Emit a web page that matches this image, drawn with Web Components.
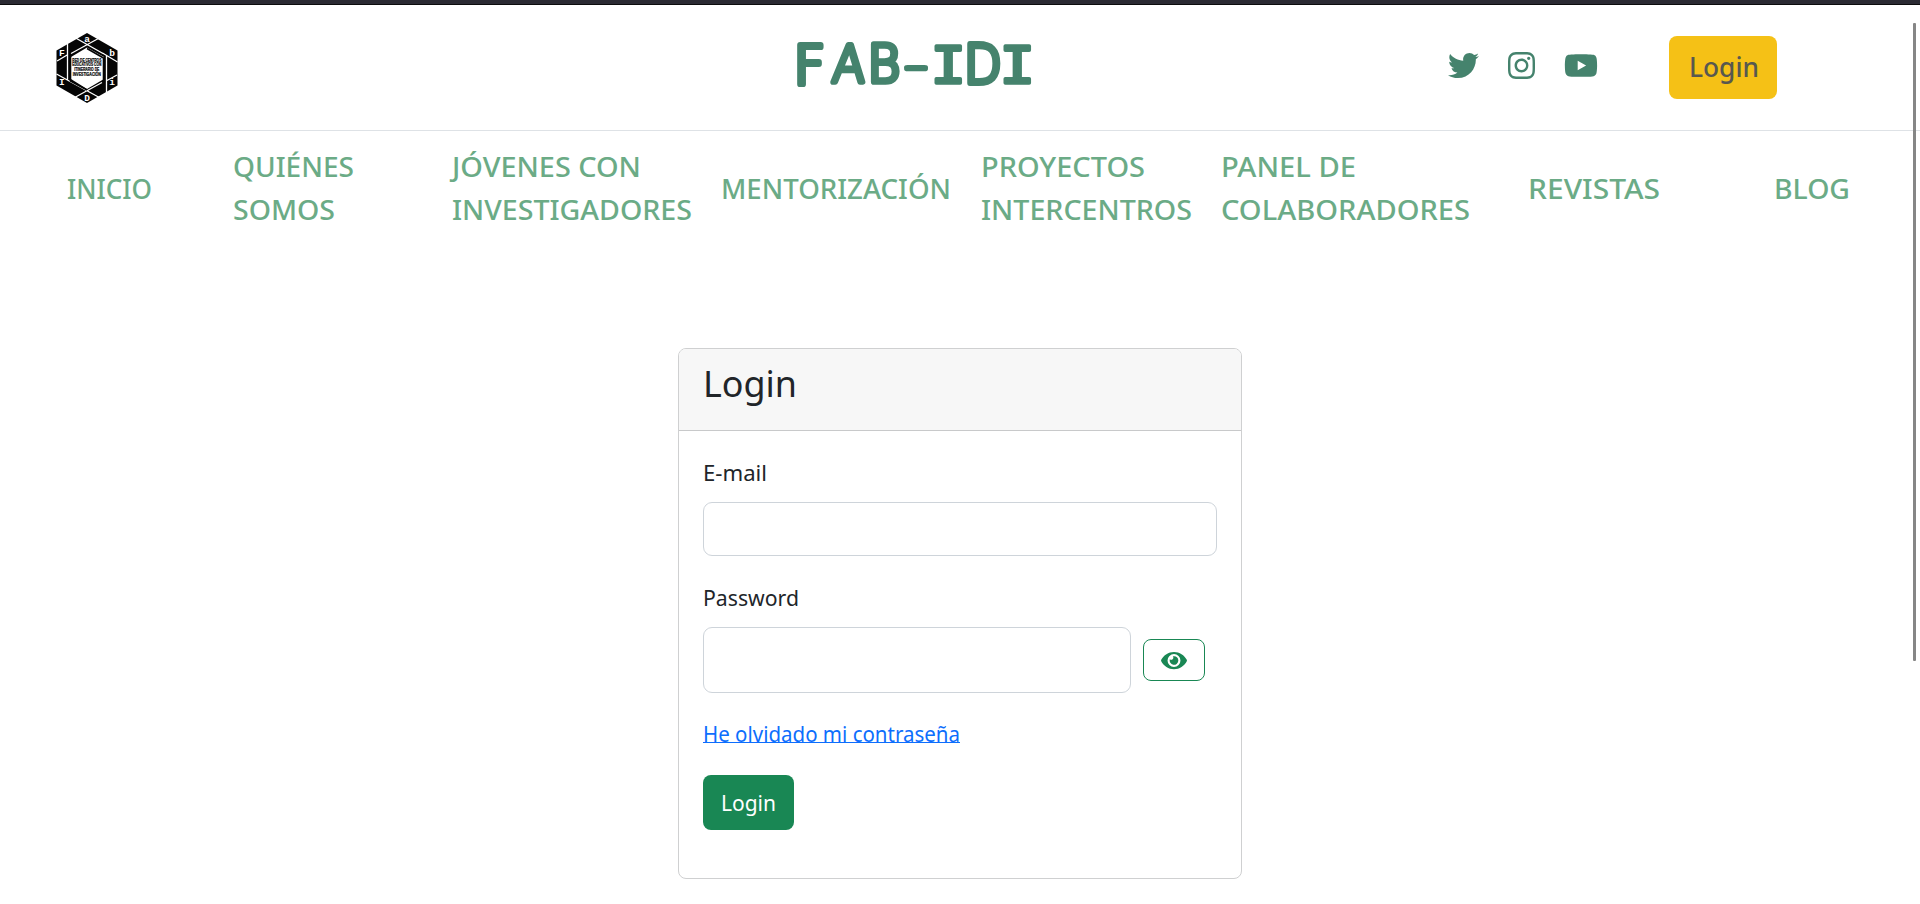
<!DOCTYPE html>
<html lang="es">
<head>
<meta charset="utf-8">
<title>FAB-IDI</title>
<style>
html,body{margin:0;height:100%;overflow:hidden;background:#fff;font-family:"Noto Sans","Open Sans",sans-serif;color:#212529}
</style>
</head>
<body>
<fab-page></fab-page>
<script>
const define = (name, html, after) => {
  const t = document.createElement('template');
  t.innerHTML = html;
  customElements.define(name, class extends HTMLElement {
    connectedCallback() {
      if (this.shadowRoot) return;
      this.attachShadow({mode: 'open'}).append(t.content.cloneNode(true));
      if (after) after(this, this.shadowRoot);
    }
  });
};

/* One line of text, condensed or widened to the width given in its "w" attribute. */
define('fit-text', `<style>
:host{display:block;white-space:nowrap}
span{display:inline-block;transform-origin:0 50%}
</style><span><slot></slot></span>`, (host, root) => {
  const w = +host.getAttribute('w'), s = root.querySelector('span');
  host.style.width = w + 'px';
  const fit = () => { s.style.transform = 'none'; const r = s.getBoundingClientRect().width; if (r) s.style.transform = `scaleX(${w / r})`; };
  fit();
  queueMicrotask(fit);
});

define('fab-logo', `<style>:host{display:block;width:62px;height:70px}svg{display:block}</style>
<svg width="62" height="70" viewBox="0 0 62 70">
<path d="M31 0 61.500 17.500V52.500L31 70 .5 52.500V17.500Z" fill="#050505"/>
<path d="M31 14.500 48 24V46L31 56 15 46V24Z" fill="#fff"/>
<g stroke="#fff" stroke-width="1.300" fill="none">
<path d="M11.500 11V47M17 3.500 47 20.500M15 20.500 46 3.500M46.500 20 61.500 29M50.500 22V60M46 49.500 15 66.500M47 66.500 15 49M15 49 .5 41M1 28 12 21.500M50 48 61 42"/></g>
<path d="M14.500 22V48L31 57M47.500 47V25L31 15.500" stroke="#050505" stroke-width="1.600" fill="none"/>
<g fill="#fff" font-family="Liberation Mono" font-weight="700" font-size="9.500" text-anchor="middle">
<text x="31" y="9">a</text><text x="5.800" y="23">F</text><text x="56" y="23">b</text><text x="5.800" y="52">I</text><text x="56" y="52">i</text><text x="31" y="67.500">D</text></g>
<g fill="#050505" stroke="#050505" stroke-width=".2" font-family="Liberation Sans" font-weight="700" font-size="4.600" text-anchor="middle">
<text x="30.800" y="28.800" textLength="29" lengthAdjust="spacingAndGlyphs">RED DE CENTROS</text>
<text x="30.800" y="33.400" textLength="29" lengthAdjust="spacingAndGlyphs">EDUCATIVOS CON</text>
<text x="30.800" y="38" textLength="25" lengthAdjust="spacingAndGlyphs">ITINERARIO DE</text>
<text x="30.800" y="42.600" textLength="28" lengthAdjust="spacingAndGlyphs">INVESTIGACIÓN</text></g>
</svg>`);

define('fab-brand', `<style>:host{display:block;width:260px;height:70px}svg{display:block;overflow:visible}</style>
<svg width="260" height="70" viewBox="0 0 260 70" fill="#45836d" stroke="#45836d" stroke-linejoin="round" stroke-linecap="round">
<g font-family="DejaVu Sans Light" font-weight="200" font-size="50" stroke-width="5.500">
<text transform="translate(2.500 46.500) scale(1.100 1.060)">F</text>
<text transform="translate(40.500 45) skewX(-3) scale(.96 1.020)">A</text>
<text transform="translate(76.500 44.500) scale(1 1.020)">B</text>
<text transform="translate(113.500 42.500) scale(1.280 .85)">-</text>
<text transform="translate(173 46) scale(.98 1.060)">D</text></g>
<g font-family="Liberation Mono" font-size="56" stroke-width="3.500">
<text transform="translate(139.500 45.500) scale(1.060 1)">I</text>
<text transform="translate(208.500 45.500) scale(1.060 1)">I</text></g>
</svg>`);

define('fab-social', `<style>:host{display:flex;align-items:center;color:#45836d}svg{display:block;fill:currentColor}
.i{margin-left:29px}.y{margin-left:29px}</style>
<svg width="31" height="31" viewBox="0 0 512 512"><path d="M459.370 151.716c.325 4.548.325 9.097.325 13.645 0 138.720-105.583 298.558-298.558 298.558-59.452 0-114.680-17.219-161.137-47.106 8.447.974 16.568 1.299 25.340 1.299 49.055 0 94.213-16.568 130.274-44.832-46.132-.975-84.792-31.188-98.112-72.772 6.498.974 12.995 1.624 19.818 1.624 9.421 0 18.843-1.300 27.614-3.573-48.081-9.747-84.143-51.980-84.143-102.985v-1.299c13.969 7.797 30.214 12.670 47.431 13.319-28.264-18.843-46.781-51.005-46.781-87.391 0-19.492 5.197-37.360 14.294-52.954 51.655 63.675 129.300 105.258 216.365 109.807-1.624-7.797-2.599-15.918-2.599-24.040 0-57.828 46.782-104.934 104.934-104.934 30.213 0 57.502 12.670 76.670 33.137 23.715-4.548 46.456-13.320 66.599-25.340-7.798 24.366-24.366 44.833-46.132 57.827 21.117-2.273 41.584-8.122 60.426-16.243-14.292 20.791-32.161 39.308-52.628 54.253z"/></svg>
<svg class="i" width="27" height="31" viewBox="0 0 448 512"><path d="M224.100 141c-63.600 0-114.900 51.300-114.900 114.900s51.300 114.900 114.900 114.900S339 319.500 339 255.900 287.700 141 224.100 141zm0 189.600c-41.100 0-74.700-33.500-74.700-74.700s33.500-74.700 74.700-74.700 74.700 33.500 74.700 74.700-33.600 74.700-74.700 74.700zm146.400-194.300c0 14.900-12 26.800-26.800 26.800-14.900 0-26.800-12-26.800-26.800s12-26.800 26.800-26.800 26.800 12 26.800 26.800zm76.100 27.200c-1.700-35.900-9.900-67.700-36.200-93.900-26.200-26.200-58-34.400-93.900-36.200-37-2.100-147.900-2.100-184.900 0-35.800 1.700-67.600 9.900-93.900 36.100s-34.400 58-36.200 93.900c-2.100 37-2.100 147.900 0 184.900 1.700 35.900 9.900 67.700 36.200 93.900s58 34.400 93.900 36.200c37 2.100 147.900 2.100 184.900 0 35.900-1.700 67.700-9.900 93.900-36.200 26.200-26.200 34.400-58 36.200-93.900 2.100-37 2.100-147.800 0-184.800zM398.800 388c-7.800 19.600-22.900 34.700-42.600 42.600-29.500 11.700-99.500 9-132.100 9s-102.700 2.600-132.100-9c-19.600-7.800-34.700-22.900-42.600-42.600-11.700-29.500-9-99.500-9-132.100s-2.600-102.700 9-132.100c7.800-19.600 22.900-34.700 42.600-42.600 29.500-11.700 99.500-9 132.100-9s102.700-2.600 132.100 9c19.600 7.800 34.700 22.900 42.600 42.600 11.700 29.500 9 99.500 9 132.100s2.700 102.700-9 132.100z"/></svg>
<svg class="y" width="34" height="31" viewBox="0 0 576 512"><path d="M549.655 124.083c-6.281-23.650-24.787-42.276-48.284-48.597C458.781 64 288 64 288 64S117.220 64 74.629 75.486c-23.497 6.322-42.003 24.947-48.284 48.597-11.412 42.867-11.412 132.305-11.412 132.305s0 89.438 11.412 132.305c6.281 23.650 24.787 41.500 48.284 47.821C117.220 448 288 448 288 448s170.780 0 213.371-11.486c23.497-6.321 42.003-24.171 48.284-47.821 11.412-42.867 11.412-132.305 11.412-132.305s0-89.438-11.412-132.305zm-317.510 213.508V175.185l142.739 81.205-142.739 81.201z"/></svg>`);

define('fab-header', `<style>
:host{display:grid;grid-template-columns:740px 666px 1fr;height:125px;border-bottom:1px solid #dee2e6}
.l{padding:28px 0 0 55.500px}.m{padding:32px 0 0 51px}
.r{display:flex;padding-left:42px;align-items:flex-start}
fab-social{margin-top:45px;width:221px}
button{width:108px;height:63px;margin:31px 0 0;padding:0 0 0 19.500px;border:0;border-radius:8px;background:#f5c116;color:#58584f;font:500 27px/57px "Noto Sans",sans-serif;text-align:left}
button fit-text{margin-top:-2px}
</style><div class="l"><fab-logo></fab-logo></div><div class="m"><fab-brand></fab-brand></div>
<div class="r"><fab-social></fab-social><button><fit-text w="70">Login</fit-text></button></div>`);

define('fab-nav', `<style>
:host{display:grid;grid-template-columns:166px 217px 271px 260px 240px 307px 246px 90px;align-items:center;padding:14px 0 0 67px;height:86px;color:#6bab86;font-size:27px;line-height:43px;font-weight:500}
</style>
<div><fit-text w="85">INICIO</fit-text></div>
<div><fit-text w="121">QUIÉNES</fit-text><fit-text w="102">SOMOS</fit-text></div>
<div style="padding-left:2px"><fit-text w="189">JÓVENES CON</fit-text><fit-text w="240">INVESTIGADORES</fit-text></div>
<div><fit-text w="230">MENTORIZACIÓN</fit-text></div>
<div><fit-text w="164">PROYECTOS</fit-text><fit-text w="211">INTERCENTROS</fit-text></div>
<div><fit-text w="135">PANEL DE</fit-text><fit-text w="249">COLABORADORES</fit-text></div>
<div><fit-text w="132">REVISTAS</fit-text></div>
<div><fit-text w="76">BLOG</fit-text></div>`);

define('fab-login', `<style>
*{box-sizing:border-box}
:host{display:block;box-sizing:border-box;width:564px;height:531px;margin:117px 0 0 678px;border:1px solid #cfd0d1;border-radius:8px;overflow:hidden;font-size:21.500px;line-height:34px}
header{height:82px;padding:11px 24px;background:#f7f7f7;border-bottom:1px solid #c8c9ca;font-size:37px;line-height:46px}
form{padding:25px 24px 0;display:flex;flex-direction:column;align-items:flex-start}
input{display:block;border:1px solid #ced4da;border-radius:9px;background:#fff;margin:0;padding:8px 16px;font:inherit;outline:0}
.e{width:514px;height:54px;margin:12px 0 25px}
.row{display:flex;align-items:center;gap:12px;margin-top:12px}
.p{width:428px;height:66px}
.eye{width:62px;height:42px;border:1px solid #198754;border-radius:8px;background:#fff;display:flex;align-items:center;justify-content:center;padding:0;color:#198754}
a{color:#0d6efd;margin-top:24px;height:26px;line-height:34px;border-bottom:1px solid #0d6efd}
.go{width:91px;height:55px;margin-top:32px;border:0;border-radius:8px;background:#198754;color:#fff;font:21.500px/53px "Noto Sans",sans-serif;padding:0 0 0 18px;text-align:left}
</style>
<header><fit-text w="94">Login</fit-text></header>
<form><fit-text w="64">E-mail</fit-text><input class="e" type="email">
<fit-text w="96">Password</fit-text><div class="row"><input class="p" type="password">
<button class="eye" type="button"><svg width="26" height="23" viewBox="0 0 576 512" fill="currentColor"><path d="M572.520 241.400C518.290 135.590 410.930 64 288 64S57.680 135.640 3.480 241.410a32.350 32.350 0 0 0 0 29.190C57.710 376.410 165.070 448 288 448s230.320-71.640 284.520-177.410a32.350 32.350 0 0 0 0-29.190zM288 400a144 144 0 1 1 144-144 143.930 143.930 0 0 1-144 144zm0-240a95.310 95.310 0 0 0-25.310 3.790 47.850 47.850 0 0 1-66.900 66.900A95.780 95.780 0 1 0 288 160z"/></svg></button></div>
<a><fit-text w="257">He olvidado mi contraseña</fit-text></a>
<button class="go" type="button"><fit-text w="55">Login</fit-text></button></form>`);

define('fab-page', `<style>
:host{display:block;height:904px;overflow:hidden;position:relative}
.top{height:5px;box-sizing:border-box;background:#2b2a33;border-bottom:1px solid #0c0c0d}
.thumb{position:absolute;left:1913px;top:23px;width:3px;height:638px;border-radius:1px;background:#868686}
</style><div class="top"></div><fab-header></fab-header><fab-nav></fab-nav><main><fab-login></fab-login></main><div class="thumb"></div>`);
</script>
</body>
</html>
